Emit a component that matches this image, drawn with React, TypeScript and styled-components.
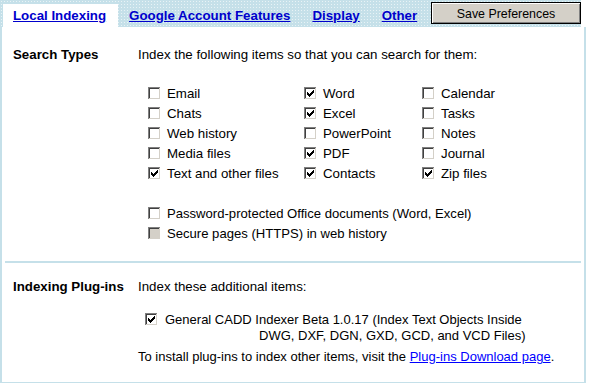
import React from 'react'
import styled, { createGlobalStyle } from 'styled-components'

const edge = '#c5e0e9'

const GlobalStyle = createGlobalStyle`
  body {
    margin: 0;
    background: #fff;
    font-family: "Liberation Sans", Arial, sans-serif;
    font-size: 13.3px;
    color: #000;
  }
`

const Frame = styled.div`
  width: 586px;
`

const TabBar = styled.div`
  display: flex;
  align-items: flex-end;
  box-sizing: border-box;
  width: 581px;
  height: 27px;
  padding-left: 3px;
  background-color: ${edge};
  background-image: radial-gradient(rgba(255, 255, 255, 0.6) 0.6px, transparent 0.8px);
  background-size: 3px 3px;
`

const Tab = styled.a<{ $active?: boolean; $first?: boolean }>`
  display: flex;
  flex: none;
  align-items: center;
  height: 23px;
  padding: 0 ${p => (p.$first ? 12 : 11)}px 0 ${p => (p.$first ? 10 : 11)}px;
  background: ${p => (p.$active ? '#fff' : 'transparent')};
  color: #0000cc;
  font-weight: bold;
  white-space: nowrap;
  text-decoration: underline;
  cursor: pointer;
`

const SaveButton = styled.button`
  flex: none;
  align-self: flex-start;
  margin: 2px 0 0 auto;
  width: 150px;
  height: 22px;
  padding: 1px 0 0;
  border: 1px solid #000;
  box-shadow: inset 1px 1px #fff, inset -1px -1px #808080;
  background: #d4d0c8;
  font-family: "Liberation Sans", Arial, sans-serif;
  font-size: 12.4px;
  white-space: nowrap;
  color: #000;
`

const Panel = styled.div`
  box-sizing: border-box;
  width: 586px;
  border-left: 2px solid ${edge};
  border-right: 2px solid ${edge};
  border-bottom: 1px solid ${edge};
`

const Section = styled.div<{ $top: number; $bottom: number }>`
  display: grid;
  grid-template-columns: 136px 1fr;
  padding: ${p => p.$top}px 0 ${p => p.$bottom}px;
`

const SectionTitle = styled.div`
  padding-left: 11px;
  font-weight: bold;
  line-height: 16px;
  white-space: nowrap;
`

const SectionBody = styled.div`
  display: flex;
  flex-direction: column;
`

const Line = styled.div<{ $gap?: number; $size?: number }>`
  line-height: 16px;
  margin-top: ${p => p.$gap || 0}px;
  font-size: ${p => p.$size || 13.3}px;
`

const Divider = styled.div`
  height: 2px;
  margin: 0 3px;
  background: ${edge};
`

const CheckGrid = styled.div`
  display: grid;
  grid-template-columns: 156px 118px 120px;
  grid-auto-rows: 20px;
  margin: 20px 0 0 10px;
`

const CheckList = styled.div`
  display: flex;
  flex-direction: column;
  margin: 20px 0 0 10px;
  font-size: 13.1px;
`

const CheckItem = styled.label`
  display: flex;
  align-items: center;
  gap: 6px;
  height: 20px;
  white-space: nowrap;
`

const PluginRow = styled.label`
  display: flex;
  align-items: flex-start;
  gap: 7px;
  margin: 17px 0 0 7px;
  line-height: 16px;
  font-size: 13px;
  svg {
    margin-top: 1px;
    flex: none;
  }
`

const Wrapped = styled.span`
  padding-left: 94px;
`

const Link = styled.a`
  color: #0000ff;
  text-decoration: underline;
  cursor: pointer;
`

const tick = [
  [9, 3, 1], [8, 4, 2], [3, 5, 1], [7, 5, 3], [3, 6, 2],
  [6, 6, 3], [3, 7, 5], [4, 8, 3], [5, 9, 1],
]

function Box({ checked, disabled }: { checked?: boolean; disabled?: boolean }) {
  return (
    <svg width="13" height="13" viewBox="0 0 13 13" shapeRendering="crispEdges">
      <rect x="0" y="0" width="13" height="13" fill="#fff" />
      <rect x="0" y="0" width="12" height="1" fill="#808080" />
      <rect x="0" y="0" width="1" height="12" fill="#808080" />
      <rect x="1" y="1" width="10" height="1" fill="#404040" />
      <rect x="1" y="1" width="1" height="10" fill="#404040" />
      <rect x="1" y="11" width="11" height="1" fill="#d4d0c8" />
      <rect x="11" y="1" width="1" height="11" fill="#d4d0c8" />
      <rect x="2" y="2" width="9" height="9" fill={disabled ? '#d4d0c8' : '#fff'} />
      {checked && tick.map(([x, y, w]) => (
        <rect key={`${x}-${y}`} x={x} y={y} width={w} height="1" fill="#000" />
      ))}
    </svg>
  )
}

const items: [string, boolean][] = [
  ['Email', false], ['Word', true], ['Calendar', false],
  ['Chats', false], ['Excel', true], ['Tasks', false],
  ['Web history', false], ['PowerPoint', false], ['Notes', false],
  ['Media files', false], ['PDF', true], ['Journal', false],
  ['Text and other files', true], ['Contacts', true], ['Zip files', true],
]

export default function App() {
  return (
    <Frame>
      <GlobalStyle />
      <TabBar>
        <Tab $active $first>Local Indexing</Tab>
        <Tab>Google Account Features</Tab>
        <Tab>Display</Tab>
        <Tab>Other</Tab>
        <SaveButton>Save Preferences</SaveButton>
      </TabBar>
      <Panel>
        <Section $top={20} $bottom={18}>
          <SectionTitle>Search Types</SectionTitle>
          <SectionBody>
            <Line>Index the following items so that you can search for them:</Line>
            <CheckGrid>
              {items.map(([name, on]) => (
                <CheckItem key={name}>
                  <Box checked={on} />
                  {name}
                </CheckItem>
              ))}
            </CheckGrid>
            <CheckList>
              <CheckItem>
                <Box />
                Password-protected Office documents (Word, Excel)
              </CheckItem>
              <CheckItem>
                <Box disabled />
                Secure pages (HTTPS) in web history
              </CheckItem>
            </CheckList>
          </SectionBody>
        </Section>
        <Divider />
        <Section $top={16} $bottom={17}>
          <SectionTitle>Indexing Plug-ins</SectionTitle>
          <SectionBody>
            <Line>Index these additional items:</Line>
            <PluginRow>
              <Box checked />
              <span>
                General CADD Indexer Beta 1.0.17 (Index Text Objects Inside
                <br />
                <Wrapped>DWG, DXF, DGN, GXD, GCD, and VCD Files)</Wrapped>
              </span>
            </PluginRow>
            <Line $gap={5} $size={13}>
              To install plug-ins to index other items, visit the <Link>Plug-ins Download page</Link>.
            </Line>
          </SectionBody>
        </Section>
      </Panel>
    </Frame>
  )
}
